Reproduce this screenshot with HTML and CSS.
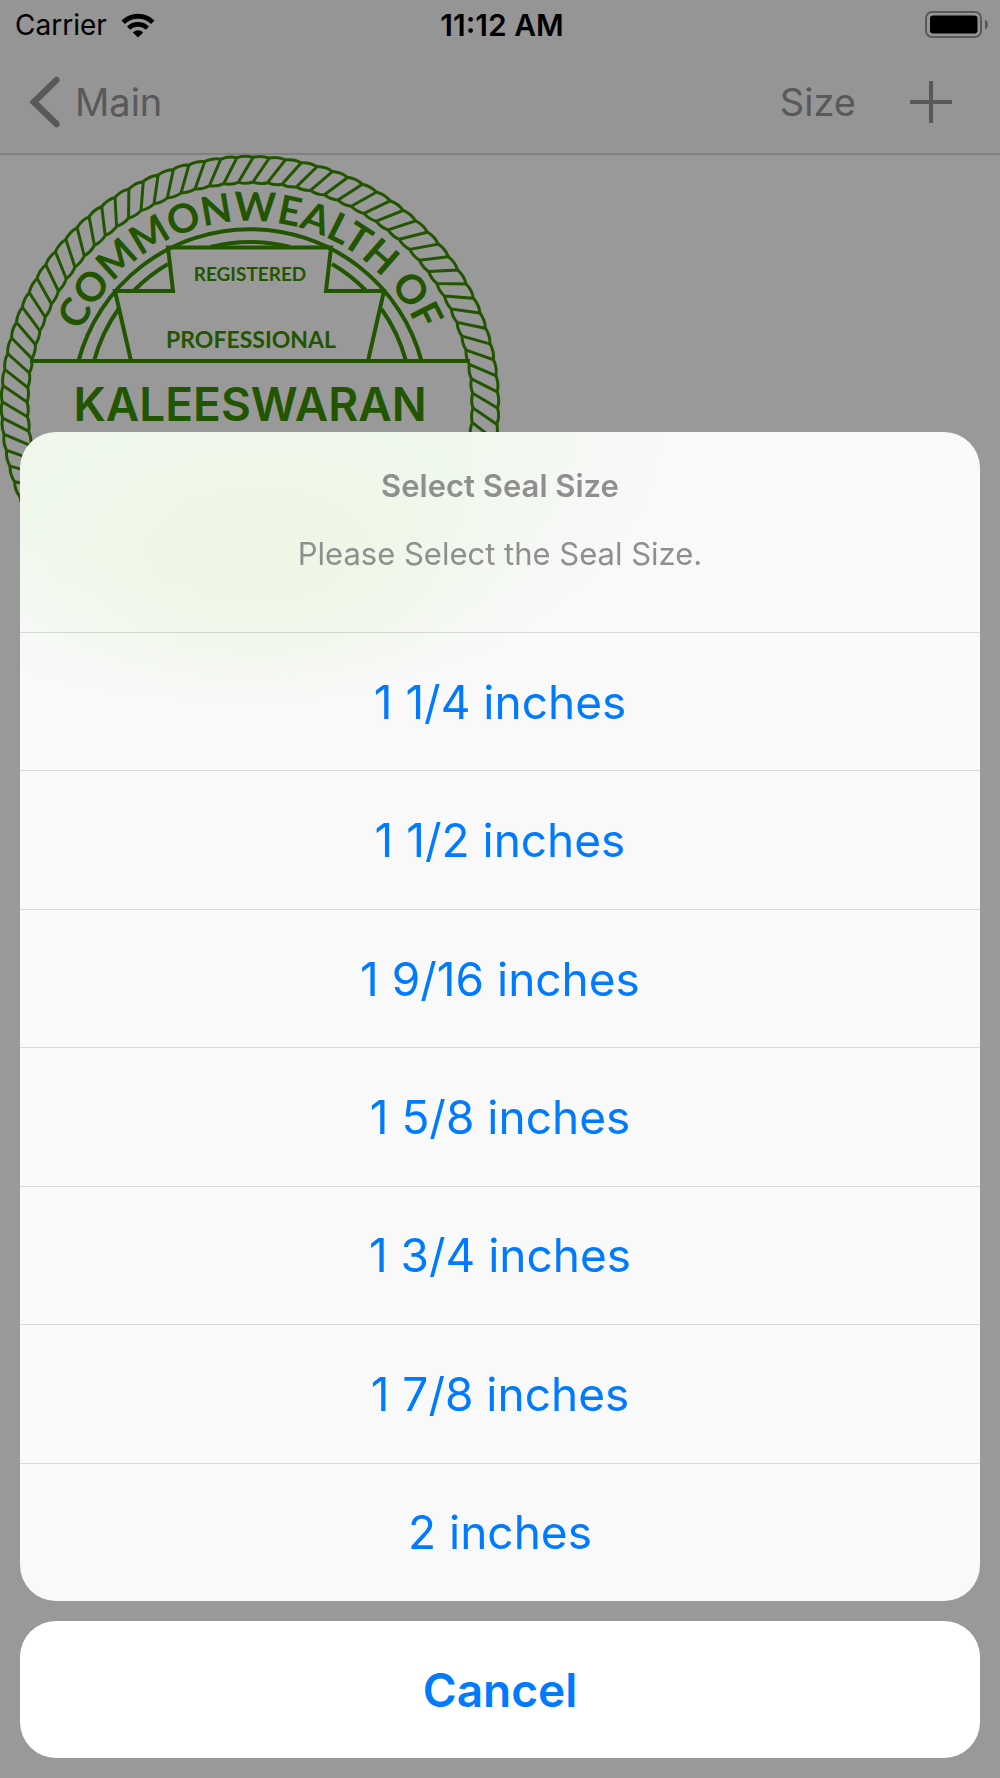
FILE: index.html
```html
<!DOCTYPE html>
<html lang="en">
<head>
<meta charset="utf-8">
<meta name="viewport" content="width=device-width, initial-scale=1">
<title>Select Seal Size</title>
<link rel="stylesheet" href="styles.css">
</head>
<body>
<header class="topbar">
  <div class="status">
    <div class="carrier">
      <span>Carrier</span>
      <svg class="wifi" viewBox="0 0 34 25" aria-hidden="true">
        <path d="M2.2 9.2A21.5 21.5 0 0 1 31.8 9.2" fill="none" stroke="#000" stroke-width="5"/>
        <path d="M7.6 15.2A13.5 13.5 0 0 1 26.4 15.2" fill="none" stroke="#000" stroke-width="4.6"/>
        <path d="M17 24.5L11.8 19.4A7.4 7.4 0 0 1 22.2 19.4Z"/>
      </svg>
    </div>
    <span class="clock">11:12 AM</span>
    <svg class="battery" viewBox="0 0 64 28" aria-hidden="true">
      <rect x="1" y="1" width="55" height="25" rx="6" fill="none" stroke="#959595" stroke-width="2"/>
      <rect x="5" y="4.500" width="47.500" height="18" rx="3"/>
      <path d="M60 8.500Q63 10 63 13.500T60 18.500Z" fill="#959595"/>
    </svg>
  </div>
  <nav class="nav">
    <a class="back" href="#main">
      <svg class="chevron" viewBox="0 0 30 52" aria-hidden="true"><path d="M26.500 4L4 26L26.500 48" fill="none" stroke="currentColor" stroke-width="6.500" stroke-linecap="round"/></svg>
      <span>Main</span>
    </a>
    <div class="tools">
      <button class="tool" type="button">Size</button>
      <button class="tool" type="button" aria-label="Add">
        <svg class="plus" viewBox="0 0 42 42" aria-hidden="true"><path d="M21 0V42M0 21H42" stroke="currentColor" stroke-width="4"/></svg>
      </button>
    </div>
  </nav>
</header>

<main>
  <svg class="seal" viewBox="0 155 500 500" role="img" aria-label="Professional seal">
    <defs>
      <!-- one rope strand, doubled until it makes half of the visible rope -->
      <g id="s1"><path d="M250 182L266 158Q259 155 249.800 157.300M250 182Q243 184.500 235.400 182.500"/></g>
      <g id="s2"><use href="#s1"/><use href="#s1" transform="rotate(3.75 250 405)"/></g>
      <g id="s4"><use href="#s2"/><use href="#s2" transform="rotate(7.5 250 405)"/></g>
      <g id="s8"><use href="#s4"/><use href="#s4" transform="rotate(15 250 405)"/></g>
      <g id="s16"><use href="#s8"/><use href="#s8" transform="rotate(30 250 405)"/></g>
      <g id="s32"><use href="#s16"/><use href="#s16" transform="rotate(60 250 405)"/></g>
      <path id="arc" d="M66 405A184 184 0 0 1 434 405"/>
    </defs>
    <g class="rope">
      <use href="#s32" transform="rotate(-123 250 405)"/>
      <use href="#s32" transform="rotate(-3 250 405)"/>
    </g>
    <g class="frame">
      <path d="M30 361H470M78.500 361A177.500 177.500 0 0 1 421.500 361"/>
      <path d="M94 361A163 163 0 0 1 118.500 309M134.500 290A163 163 0 0 1 168 264M210 247A163 163 0 0 1 290 247M332 264A163 163 0 0 1 365.500 290M381.500 309A163 163 0 0 1 406 361"/>
      <path d="M131 361L115 291H173L168 247.500H331L326 291H384L368 361"/>
    </g>
    <text class="motto"><textPath href="#arc" startOffset="50%" text-anchor="middle">COMMONWEALTH OF</textPath></text>
    <text class="rank" x="250" y="281">REGISTERED</text>
    <text class="title" x="251" y="348">PROFESSIONAL</text>
    <text class="name" x="250" y="421">KALEESWARAN</text>
  </svg>
</main>

<div class="overlay">
  <section class="sheet" role="dialog" aria-labelledby="sheet-title">
    <div class="intro">
      <h1 id="sheet-title">Select Seal Size</h1>
      <p>Please Select the Seal Size.</p>
    </div>
    <div class="options">
      <button type="button">1 1/4 inches</button>
      <button type="button">1 1/2 inches</button>
      <button type="button">1 9/16 inches</button>
      <button type="button">1 5/8 inches</button>
      <button type="button">1 3/4 inches</button>
      <button type="button">1 7/8 inches</button>
      <button type="button">2 inches</button>
    </div>
  </section>
  <button class="cancel" type="button">Cancel</button>
</div>
</body>
</html>
```
FILE: styles.css
```css
* {
  box-sizing: border-box;
}

body {
  margin: 0;
  min-height: 100vh;
  background: #fff;
  font-family: Inter, "Liberation Sans", sans-serif;
}

button {
  margin: 0;
  padding: 0;
  border: 0;
  background: none;
  font: inherit;
  color: inherit;
}

.topbar {
  background: #f9f9f9;
  border-bottom: 2px solid #d8d8d8;
}

.status {
  display: grid;
  grid-template-columns: 1fr auto 1fr;
  align-items: center;
  height: 50px;
  padding: 0 11px 0 15px;
  font-size: 28px;
}

.carrier {
  display: flex;
  align-items: center;
  gap: 14px;
}

.wifi {
  width: 34px;
  height: 25px;
}

.clock {
  font-size: 30px;
  font-weight: 600;
}

.battery {
  justify-self: end;
  width: 64px;
  height: 28px;
}

.nav {
  display: flex;
  justify-content: space-between;
  align-items: center;
  height: 103px;
  padding: 0 48px 0 30px;
  font-size: 38px;
  color: #959595;
}

.back {
  display: flex;
  align-items: center;
  gap: 15px;
  color: inherit;
  text-decoration: none;
}

.chevron {
  width: 30px;
  height: 52px;
}

.tools {
  display: flex;
  align-items: center;
  gap: 54px;
}

.plus {
  display: block;
  width: 42px;
  height: 42px;
}

.seal {
  display: block;
  width: 50%;
  overflow: visible;
  fill: #398e00;
}

.rope {
  fill: none;
  stroke: #398e00;
  stroke-width: 3;
}

.frame {
  fill: none;
  stroke: #398e00;
  stroke-width: 4;
}

.motto {
  font: 700 40px Lato, sans-serif;
}

.rank,
.title {
  font: 700 19px Lato, sans-serif;
  text-anchor: middle;
}

.title {
  font-size: 23px;
}

.name {
  font-size: 46px;
  font-weight: 600;
  text-anchor: middle;
}

.overlay {
  position: fixed;
  inset: 0;
  display: flex;
  flex-direction: column;
  justify-content: flex-end;
  gap: 20px;
  padding: 20px;
  background: rgba(0, 0, 0, 0.4);
}

.sheet {
  overflow: hidden;
  border-radius: 36px;
  background:
    radial-gradient(ellipse 260px 150px at 240px 120px, rgba(238, 247, 229, 0.9) 20%, rgba(240, 248, 236, 0) 100%),
    radial-gradient(ellipse 460px 280px at 200px 0, #f0f8ed 50%, rgba(240, 248, 237, 0) 100%),
    #f9f9f9;
}

.intro {
  display: flex;
  flex-direction: column;
  gap: 28px;
  height: 200px;
  padding: 34px 20px 0;
  font-size: 31px;
  line-height: 40px;
  text-align: center;
  color: #8f8f8f;
}

.intro h1,
.intro p {
  margin: 0;
  font-size: inherit;
}

.intro h1 {
  font-weight: 600;
}

.options {
  display: grid;
  grid-auto-rows: 1fr;
  min-height: 969px;
}

.options button {
  border-top: 1px solid rgba(60, 90, 60, 0.18);
  font-size: 46px;
  color: #007aff;
}

.cancel {
  min-height: 137px;
  border-radius: 36px;
  background: #fff;
  font-size: 46px;
  font-weight: 600;
  color: #007aff;
}
```
